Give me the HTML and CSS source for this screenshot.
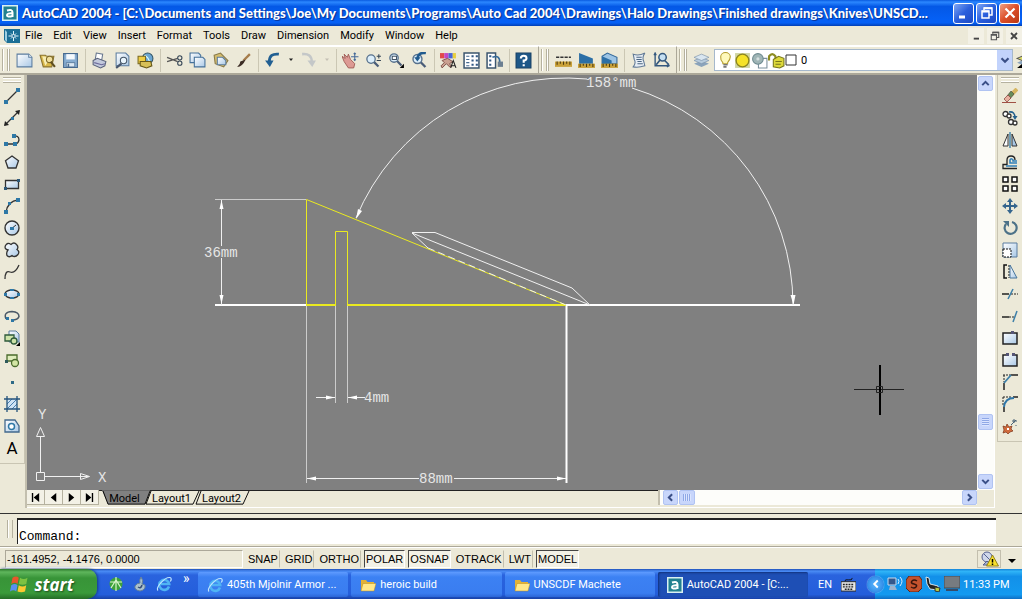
FILE: index.html
```html
<!DOCTYPE html>
<html lang="en">
<head>
    <meta charset="UTF-8">
    <meta name="viewport" content="width=device-width, initial-scale=1.0">
    <title>AutoCAD 2004</title>
    <link rel="stylesheet" href="styles.css">
</head>
<body>
    <!-- shared icon shapes -->
    <svg class="defs" width="0" height="0" aria-hidden="true">
        <defs>
            <linearGradient id="paper" x1="0" y1="0" x2="1" y2="1">
                <stop offset="0" stop-color="#ffffff"/>
                <stop offset="1" stop-color="#a9c8e6"/>
            </linearGradient>
            <symbol id="ie" viewBox="0 0 16 16">
                <path d="M13 10.500A5 5 0 1 1 13.200 8H5" fill="none" stroke="#4fb4f4" stroke-width="2.600"/>
                <path d="M2 14.500C-.5 12 8 1 14 1.500c2 .5 1 3 .3 4" fill="none" stroke="#bfe6ff" stroke-width="1.200"/>
            </symbol>
            <symbol id="folder" viewBox="0 0 16 16">
                <path d="M1 3h5l1.500 2H14v9H1z" fill="#e2b236"/>
                <path d="M3 6.500h13L14 14H1z" fill="#ffe88a" stroke="#b98a1c" stroke-width=".5"/>
            </symbol>
            <symbol id="acad" viewBox="0 0 16 16">
                <path d="M0 0h16v16H0z" fill="#d9f0f2"/>
                <path d="M1.500 1.500h13v13h-13z" fill="#21808f"/>
                <path d="M5 5.500q5.500-1.800 5.500 2V12M10.500 8.300Q5 8 5 10.200t5.500.8" fill="none" stroke="#fff" stroke-width="2"/>
            </symbol>
            <symbol id="left" viewBox="0 0 16 16"><path d="M10 4L6 8l4 4" fill="none" stroke="#3a4f87" stroke-width="2.500"/></symbol>
            <symbol id="right" viewBox="0 0 16 16"><path d="M6 4l4 4-4 4" fill="none" stroke="#3a4f87" stroke-width="2.500"/></symbol>
            <symbol id="up" viewBox="0 0 16 16"><path d="M4 10l4-4 4 4" fill="none" stroke="#3a4f87" stroke-width="2.500"/></symbol>
            <symbol id="down" viewBox="0 0 16 16"><path d="M4 6l4 4 4-4" fill="none" stroke="#3a4f87" stroke-width="2.500"/></symbol>
            <symbol id="lens" viewBox="0 0 16 16">
                <path d="M9.500 9.500l5 5" stroke="#4a5d78" stroke-width="2.400"/>
                <circle cx="6.500" cy="6.500" r="4.500" fill="#dceefa" stroke="#56708c" stroke-width="1.400"/>
            </symbol>
            <symbol id="restore" viewBox="0 0 16 16">
                <path d="M5 5V3h8v7h-3" fill="none" stroke="currentColor" stroke-width="1.500"/>
                <path d="M3 6h7v7H3z" fill="none" stroke="currentColor" stroke-width="1.500"/>
                <path d="M3 6.500h7M5 3.200h8" stroke="currentColor" stroke-width="2"/>
            </symbol>
        </defs>
    </svg>

    <header class="title-bar">
        <svg class="app-icon"><use href="#acad"/></svg>
        <h1>AutoCAD 2004 - [C:\Documents and Settings\Joe\My Documents\Programs\Auto Cad 2004\Drawings\Halo Drawings\Finished drawings\Knives\UNSCD...</h1>
        <button class="win-btn" aria-label="Minimize"><svg viewBox="0 0 16 16"><path d="M3 12h6" stroke="#fff" stroke-width="3"/></svg></button>
        <button class="win-btn" aria-label="Restore"><svg><use href="#restore"/></svg></button>
        <button class="win-btn close" aria-label="Close"><svg viewBox="0 0 16 16"><path d="M3.500 3.500l9 9m0-9l-9 9" stroke="#fff" stroke-width="2.200"/></svg></button>
    </header>

    <nav class="menu-bar">
        <svg class="doc-icon" viewBox="0 0 16 16">
            <path d="M0 1h16v14H3L0 12z" fill="#1c6f96"/>
            <path d="M1 2v10l2 2V4z" fill="#9fd0e2"/>
            <path d="M9.500 3v10M4.500 8h10M7 5.500l5 5m0-5l-5 5" stroke="#dff4fb"/>
            <circle cx="9.500" cy="8" r="1.500" fill="#1c6f96" stroke="#fff" stroke-width=".6"/>
        </svg>
        <button>File</button>
        <button>Edit</button>
        <button>View</button>
        <button>Insert</button>
        <button>Format</button>
        <button>Tools</button>
        <button>Draw</button>
        <button>Dimension</button>
        <button>Modify</button>
        <button>Window</button>
        <button>Help</button>
        <div class="doc-buttons">
            <button aria-label="Minimize drawing"><svg viewBox="0 0 16 16"><path d="M5 11.500h7" stroke="#444" stroke-width="2.500"/></svg></button>
            <button aria-label="Restore drawing"><svg><use href="#restore"/></svg></button>
            <button aria-label="Close drawing"><svg viewBox="0 0 16 16"><path d="M4 4l8 8m0-8l-8 8" stroke="#444" stroke-width="2.400"/></svg></button>
        </div>
    </nav>

    <div class="toolbars">
        <div class="toolbar">
            <span class="grip"></span>
            <button aria-label="New"><svg viewBox="0 0 16 16"><path d="M1 2h11l3 3v9H1z" fill="url(#paper)" stroke="#5b7da0"/><path d="M12 2v3h3" fill="#fff" stroke="#5b7da0"/></svg></button>
            <button aria-label="Open"><svg viewBox="0 0 16 16"><path d="M1 3h5l1 1h7l-2 10H4z" fill="#d9b84a" stroke="#8a7430"/><path d="M3 4l8 1-5 8z" fill="#f7edb4"/><circle cx="10" cy="7" r="3" fill="#f1df9a" stroke="#7d6a2b"/><path d="M11 9l4 5" stroke="#5e4f20" stroke-width="2"/></svg></button>
            <button aria-label="Save"><svg viewBox="0 0 16 16"><path d="M1.500 1.500h13v13h-13z" fill="#87add1" stroke="#46698f"/><path d="M4 2h8v5H4z" fill="#f4f9fd"/><path d="M4 10h8v4H4z" fill="#dbe8f3" stroke="#46698f" stroke-width=".7"/><path d="M6 11v3" stroke="#46698f" stroke-width="1.500"/></svg></button>
            <span class="sep"></span>
            <button aria-label="Plot"><svg viewBox="0 0 16 16"><path d="M5 1l6 1-1 6-6-1z" fill="#fff" stroke="#69788f"/><path d="M2 8l4-2 8 3-1 4-4 2-7-3z" fill="#c2c9dc" stroke="#59627b"/><path d="M3 10l7 2 3-1" fill="none" stroke="#6d6b9b"/></svg></button>
            <button aria-label="Plot Preview"><svg viewBox="0 0 16 16"><path d="M2 1h9l3 3v9H2z" fill="url(#paper)" stroke="#5b7da0"/><circle cx="9" cy="8" r="3" fill="#e9f5fd" stroke="#456"/><path d="M7 11l-5 4" stroke="#46566e" stroke-width="2"/></svg></button>
            <button aria-label="Publish"><svg viewBox="0 0 16 16"><circle cx="10" cy="6" r="5" fill="#6ba6d2" stroke="#356"/><path d="M7 3q4 2 5 7" stroke="#dff" fill="none"/><path d="M1 4h7v7H1z" fill="#f0ce45" stroke="#7a6a20"/><path d="M3 9h10l1 4-5 2-6-2z" fill="#d7c057" stroke="#665715"/></svg></button>
            <span class="sep"></span>
            <button aria-label="Cut"><svg viewBox="0 0 16 16"><path d="M1 5l10 4M1 9l10-3" stroke="#555" stroke-width="1.200"/><circle cx="13" cy="5.500" r="2" fill="none" stroke="#345"/><circle cx="13" cy="10.500" r="2" fill="none" stroke="#345"/></svg></button>
            <button aria-label="Copy"><svg viewBox="0 0 16 16"><path d="M1 1h8l2 2v7H1z" fill="url(#paper)" stroke="#45719a"/><path d="M5 5h8l2 2v7H5z" fill="url(#paper)" stroke="#45719a"/></svg></button>
            <button aria-label="Paste"><svg viewBox="0 0 16 16"><path d="M2 3l6-2 7 7-4 6-8-3z" fill="#d5bd6d" stroke="#897a48"/><path d="M5 5h5l3 3v4H5z" fill="url(#paper)" stroke="#5b7da0"/></svg></button>
            <button aria-label="Match Properties"><svg viewBox="0 0 16 16"><path d="M14 2L8 8" stroke="#a67c4a" stroke-width="2.200"/><path d="M10 7Q7 14 2 14q3-2 3-5z" fill="#3c2d26"/></svg></button>
            <span class="sep"></span>
            <button aria-label="Undo"><svg viewBox="0 0 16 16"><path d="M14 2Q5 1 5 9" fill="none" stroke="#215f92" stroke-width="2.600"/><path d="M1 8h8l-3.500 6z" fill="#215f92"/></svg></button>
            <button class="drop" aria-label="Undo list"><svg viewBox="0 0 8 8"><path d="M2 2.500h4l-2 2.500z" fill="#222"/></svg></button>
            <button aria-label="Redo"><svg viewBox="0 0 16 16"><path d="M2 2q9-1 9 7" fill="none" stroke="#c4c7c8" stroke-width="2.400"/><path d="M7 8h8l-3.500 6z" fill="#c4c7c8"/></svg></button>
            <button class="drop" aria-label="Redo list"><svg viewBox="0 0 8 8"><path d="M2 2.500h4l-2 2.500z" fill="#c4c0b4"/></svg></button>
            <span class="sep"></span>
            <button aria-label="Pan"><svg viewBox="0 0 16 16"><path d="M0 4l3 2-1-4 3 3 1-3 2 5 4 4-1 4H6L2 9z" fill="#dd9a94" stroke="#9b5650" stroke-width=".8"/><path d="M12 1v7M8.500 4.500h7M11 2l1-1 1 1M11 7l1 1 1-1" stroke="#456a99" fill="none"/></svg></button>
            <button aria-label="Zoom Realtime"><svg viewBox="0 0 16 16"><use href="#lens" width="14" height="16"/><path d="M11 4h4m-2-2v4M11 8h4" stroke="#345"/></svg></button>
            <button aria-label="Zoom Window"><svg viewBox="0 0 16 16"><use href="#lens" width="14" height="14"/><path d="M4 4h4v3H4z" fill="#fff" stroke="#456"/><path d="M15 11v4h-4z" fill="#000"/></svg></button>
            <button aria-label="Zoom Previous"><svg viewBox="0 0 16 16"><use href="#lens" width="15" height="16"/><path d="M14 1Q7 0 6 6" fill="none" stroke="#205a8e" stroke-width="2.400"/><path d="M3 5h6L6 9z" fill="#205a8e"/></svg></button>
            <span class="sep"></span>
            <button aria-label="Properties"><svg viewBox="0 0 16 16"><path d="M0 1h4v5H0z" fill="#e04a4a"/><path d="M4 1h4v5H4z" fill="#c247c4"/><path d="M8 1h4v5H8z" fill="#4766d8"/><path d="M12 1h3v5h-3z" fill="#e8ce3c"/><path d="M2 8l5-2 5 3-3 2 2 3H9l-3-3-4 4-1-2 3-3z" fill="#caa091" stroke="#72453d" stroke-width=".8"/><path d="M10 15l2.500-7 2.500 7M11 13h3" fill="none" stroke="#222"/></svg></button>
            <button aria-label="DesignCenter"><svg viewBox="0 0 16 16"><path d="M1 1h14v14H1z" fill="#fff" stroke="#3b556e" stroke-width="1.400"/><path d="M3 4h3M3 7h3M3 10h3M3 13h3" stroke="#456a91"/><path d="M8 3h2v2H8zM12 3h2v2h-2zM8 7h2v2H8zM12 7h2v2h-2zM8 11h2v2H8zM12 11h2v2h-2z" fill="#325985"/></svg></button>
            <button aria-label="Tool Palettes"><svg viewBox="0 0 16 16"><path d="M1 1h8v14H1z" fill="#fff" stroke="#3b556e" stroke-width="1.400"/><path d="M3 3h2v2H3zM3 7h2v2H3zM3 11h2v2H3z" fill="#325985"/><path d="M6 5q7-3 7 5" fill="none" stroke="#356b9b" stroke-width="1.500"/><path d="M11 9h5v5h-5z" fill="#6c7f91"/></svg></button>
            <span class="sep"></span>
            <button aria-label="Help"><svg viewBox="0 0 16 16"><path d="M1 1h14v14H1z" fill="#1d5788" stroke="#123d63"/><path d="M5.500 6q0-2.500 2.700-2.500T10.800 6Q10.800 7.500 8.200 8v2M8.200 11.500v2" fill="none" stroke="#fff" stroke-width="2"/></svg></button>
        </div>
        <div class="toolbar">
            <span class="grip"></span>
            <button aria-label="Distance"><svg viewBox="0 0 16 16"><path d="M1 5h14" stroke="#333" stroke-width="1.400" stroke-dasharray="3 1"/><path d="M0 9h16v5H0z" fill="#c9a13a"/><path d="M2 9v3m3-3v2m3-2v3m3-3v2m3-2v3" stroke="#4b3a10"/></svg></button>
            <button aria-label="Area"><svg viewBox="0 0 16 16"><path d="M1 1l13 5v5H1z" fill="#2c6fa6"/><path d="M0 11h16v4H0z" fill="#c9a13a"/><path d="M2 11v3m3-3v2m3-2v3m3-3v2m3-2v3" stroke="#4b3a10"/></svg></button>
            <button aria-label="Region Properties"><svg viewBox="0 0 16 16"><path d="M1 4l5-3 9 4v6H1z" fill="#9dc4e4" stroke="#34699a"/><path d="M1 4l9 4v4H1z" fill="#2c6fa6"/><path d="M0 11h16v4H0z" fill="#c9a13a"/><path d="M2 11v3m3-3v2m3-2v3m3-3v2m3-2v3" stroke="#4b3a10"/></svg></button>
            <span class="sep"></span>
            <button aria-label="List"><svg viewBox="0 0 16 16"><path d="M3 2q5 2 11-1-3 4-1 8l1 4q-6 2-11 1 3-4 1-7z" fill="#e6edf5" stroke="#627a96"/><path d="M6 5h5M6 7h5M7 9h4M7 11h5" stroke="#4b6684"/></svg></button>
            <button aria-label="Locate Point"><svg viewBox="0 0 16 16"><path d="M2 1v12h13M1 3l1-2 1 2M13 12l2 1-2 1" fill="none" stroke="#34587e" stroke-width="1.300"/><circle cx="9" cy="5" r="3.500" fill="#c5dff2" stroke="#34587e" stroke-width="1.400"/><path d="M11 8l4 4M7 7l-4 5" stroke="#34587e" stroke-width="1.600"/></svg></button>
        </div>
        <div class="toolbar layers">
            <span class="grip"></span>
            <button aria-label="Layer Properties Manager"><svg viewBox="0 0 16 16"><path d="M1 11l7-3 7 3-7 3z" fill="#8aa3bb"/><path d="M1 8l7-3 7 3-7 3z" fill="#b7cbdc" stroke="#7790a8" stroke-width=".6"/><path d="M1 5l7-3 7 3-7 3z" fill="#d9e6f0" stroke="#7790a8" stroke-width=".6"/></svg></button>
            <div class="layer-combo">
                <svg viewBox="0 0 16 16"><path d="M5.500 10Q3 7 3.500 4.500a4.500 4 0 0 1 9 0Q12.500 7 10 10v1H5.500z" fill="#fff9bb" stroke="#b59d2c"/><path d="M6 12h4M6 14h3" stroke="#777" stroke-width="1.500"/></svg>
                <svg viewBox="0 0 16 16"><path d="M1 1h14v14H1z" fill="#cfd5a4"/><circle cx="8" cy="8" r="6" fill="#f5e229" stroke="#8c8520" stroke-width="1.300"/></svg>
                <svg viewBox="0 0 16 16"><path d="M7 6h8v9H7z" fill="#fff" stroke="#7b8f9c"/><circle cx="6.500" cy="6.500" r="5" fill="#9fb5b6" stroke="#6e8a90"/><circle cx="6.500" cy="6.500" r="1.500" fill="#d5dfe0"/></svg>
                <svg viewBox="0 0 16 16"><path d="M1 8V4q3-4 6 0v4" fill="none" stroke="#8d8c22" stroke-width="2"/><path d="M5 7l5-3 5 2v7l-4 2-6-1z" fill="#ddd93a" stroke="#77761c"/><path d="M7 9h6M7 11.500h5" stroke="#77761c"/></svg>
                <svg class="swatch" viewBox="0 0 12 12"><path d="M1 1h10v10H1z" fill="#fff" stroke="#333"/></svg>
                <select aria-label="Layer"><option>0</option></select>
                <span class="combo-arrow"><svg><use href="#down"/></svg></span>
            </div>
            <button class="last" aria-label="Make Layer Current"><svg viewBox="0 0 16 16"><path d="M1 10l7-3 7 3-7 3z" fill="#8aa3bb"/><path d="M1 6l7-3 7 3-7 3z" fill="#d9d96a" stroke="#555"/><path d="M1 15l5-4v4z"/></svg></button>
        </div>
    </div>

    <main class="workspace">
        <div class="side-bar">
            <div class="side-tools">
                <span class="grip-h"></span>
                <button aria-label="Line"><svg viewBox="0 0 16 16"><path d="M2 14L14 2" stroke="#333" stroke-width="1.300"/><path d="M0 12h4v4H0zM12 0h4v4h-4z" fill="#2e78a6"/></svg></button>
                <button aria-label="Construction Line"><svg viewBox="0 0 16 16"><path d="M1 15L15 1" stroke="#333" stroke-width="1.300"/><path d="M0 16l1-5 4 4zM16 0l-5 1 4 4z" fill="#222"/><path d="M7 7h3v3H7z" fill="#2e78a6"/></svg></button>
                <button aria-label="Polyline"><svg viewBox="0 0 16 16"><path d="M2 12h9M9 4q6-1 6 4-1 4-4 4" fill="none" stroke="#333" stroke-width="1.300"/><path d="M0 10h4v4H0zM9 10h4v4H9zM8 2h4v4H8z" fill="#2e78a6"/></svg></button>
                <button aria-label="Polygon"><svg viewBox="0 0 16 16"><path d="M8 2l6.500 4.800L12 14H4L1.500 6.800z" fill="url(#paper)" stroke="#333" stroke-width="1.300"/></svg></button>
                <button aria-label="Rectangle"><svg viewBox="0 0 16 16"><path d="M1.500 4.500h13v8h-13z" fill="url(#paper)" stroke="#333" stroke-width="1.300"/><path d="M0 11h3v3H0zM13 3h3v3h-3z" fill="#2e5878"/></svg></button>
                <button aria-label="Arc"><svg viewBox="0 0 16 16"><path d="M2 14Q4 3 14 2" fill="none" stroke="#333" stroke-width="1.300"/><path d="M0 12h4v4H0zM12 0h4v4h-4zM4 4h3v3H4z" fill="#2e78a6"/></svg></button>
                <button aria-label="Circle"><svg viewBox="0 0 16 16"><circle cx="8" cy="8" r="7" fill="url(#paper)" stroke="#333" stroke-width="1.400"/><path d="M7 9l5-4" stroke="#333"/><path d="M6 7h4v3H6z" fill="#2e78a6"/></svg></button>
                <button aria-label="Revision Cloud"><svg viewBox="0 0 16 16"><path d="M4 8Q0 7 1.500 3.500 3.500 0 7 2.500 10-.5 12.500 2.500 15 5 13 7.500q3 2 1 5-3 3.500-6 1-3 2.500-5 0-1-3 1-5.500z" fill="url(#paper)" stroke="#333" stroke-width="1.300"/></svg></button>
                <button aria-label="Spline"><svg viewBox="0 0 16 16"><path d="M1 15Q1 6 6 8t9-7" fill="none" stroke="#333" stroke-width="1.300"/></svg></button>
                <button aria-label="Ellipse"><svg viewBox="0 0 16 16"><ellipse cx="8" cy="8" rx="7" ry="4" fill="url(#paper)" stroke="#333" stroke-width="1.300"/><path d="M6 3h4v2H6zM6 11h4v2H6zM0 7h3v3H0zM13 7h3v3h-3z" fill="#2e78a6"/></svg></button>
                <button aria-label="Ellipse Arc"><svg viewBox="0 0 16 16"><path d="M2 11Q-1 4 8 3.500 15 4 15 8.500 14 12 8 12" fill="none" stroke="#4a5866" stroke-width="1.500"/><path d="M2 9h3v3H2zM7 11h3v3H7z" fill="#2e78a6"/></svg></button>
                <button aria-label="Insert Block"><svg viewBox="0 0 16 16"><path d="M5 1h7l3 3v8H5z" fill="url(#paper)" stroke="#5b7da0"/><path d="M1 5h9v6H1z" fill="#cde3a8" stroke="#2e5a3a" stroke-width="1.300"/><circle cx="10" cy="11" r="3" fill="#cde3a8" stroke="#2e5a3a" stroke-width="1.300"/><path d="M16 12v4h-4z"/></svg></button>
                <button aria-label="Make Block"><svg viewBox="0 0 16 16"><path d="M3 3h10v6H3z" fill="#e0edbd" stroke="#4a6b2c" stroke-width="1.300"/><circle cx="11" cy="11" r="3.500" fill="#d4e6a5" stroke="#4a6b2c" stroke-width="1.300"/><path d="M1 8h3v3H1z" fill="#2e5a5a"/></svg></button>
                <button aria-label="Point"><svg viewBox="0 0 16 16"><path d="M7 7h3v3H7z" fill="#2e6a86"/></svg></button>
                <button aria-label="Hatch"><svg viewBox="0 0 16 16"><path d="M3 3h10v10H3z" fill="#cfe3f4"/><path d="M3 8l5-5M3 13L13 3M8 13l5-5" stroke="#4b81b0"/><path d="M3 0v16M13 0v16M0 3h16M0 13h16" stroke="#24537c" stroke-width="1.300"/></svg></button>
                <button aria-label="Region"><svg viewBox="0 0 16 16"><path d="M1 2h10l4 6v6H1z" fill="url(#paper)" stroke="#42688d" stroke-width="1.300"/><circle cx="7.500" cy="8.500" r="3" fill="#fff" stroke="#2e78a6" stroke-width="1.500"/></svg></button>
                <button class="mtext" aria-label="Multiline Text">A</button>
            </div>
        </div>

        <div class="drawing">
            <div class="canvas">
                <svg class="model" width="100%" height="100%">
                    <!-- extension lines -->
                    <g class="ext">
                        <path d="M188 124.500h91"/>
                        <path d="M279.500 231v177M308.500 231v97M320.500 231v97"/>
                    </g>
                    <g class="heavy">
                        <path d="M188 230h91M539 230h234"/>
                        <path d="M539.500 230v178"/>
                    </g>
                    <!-- part outline -->
                    <g class="part">
                        <path d="M279.500 230V124.500L539 230"/>
                        <path d="M308.500 230v-73.500h12V230"/>
                        <path class="base" d="M279 230h30M320 230h219"/>
                    </g>
                    <g class="thin">
                        <path d="M385 157.500h23L545 213l18 17L385 158l16 15"/>
                        <path d="M401 173l138 57" stroke-dasharray="7 4"/>
                        <!-- dimension lines -->
                        <path d="M194.500 125v46M194.500 183v47"/>
                        <path d="M289 322.500h19M321 322.500h17"/>
                        <path d="M280 403.500h112M427 403.500h112"/>
                        <path d="M329 143A227 227 0 0 1 560 4M605 13A227 227 0 0 1 766 230"/>
                    </g>
                    <g class="arrows">
                        <path d="M194.500 125l-2 9h4zM194.500 229l-2-9h4z"/>
                        <path d="M308 322.500l-9-2v4zM321 322.500l9-2v4z"/>
                        <path d="M280 403.500l9-2v4zM539 403.500l-9-2v4z"/>
                        <path d="M329 144l2-10 4 2zM766.500 230l-3-10h5z"/>
                    </g>
                    <g class="dim-text">
                        <text x="177" y="182">36mm</text>
                        <text x="337" y="327">4mm</text>
                        <text x="392" y="408">88mm</text>
                        <text x="559" y="12">158°mm</text>
                    </g>
                    <!-- UCS icon -->
                    <g class="thin">
                        <path d="M9.500 397.500h8v8h-8zM13.500 397v-35M17.500 401.500h44"/>
                        <path d="M13.500 352.500l-4 9h8zM62.500 401.500l-9-3v6z"/>
                    </g>
                    <g class="dim-text">
                        <text x="11" y="344">Y</text>
                        <text x="71" y="407">X</text>
                    </g>
                    <g class="cursor">
                        <path d="M827 314.500h50"/>
                        <path class="v" d="M853 290v50"/>
                        <path d="M849.500 311.500h6v6h-6z"/>
                    </g>
                </svg>
                <div class="scroll-v">
                    <button class="sb" aria-label="Scroll up"><svg><use href="#up"/></svg></button>
                    <span class="track"></span>
                    <span class="sb thumb"></span>
                    <span class="rest"></span>
                    <button class="sb" aria-label="Scroll down"><svg><use href="#down"/></svg></button>
                </div>
            </div>
            <div class="tab-row">
                <button class="nav" aria-label="First tab"><svg viewBox="0 0 12 12"><path d="M2 1h1.500v10H2zM10 1v10L4 6z"/></svg></button>
                <button class="nav" aria-label="Previous tab"><svg viewBox="0 0 12 12"><path d="M9 1v10L3 6z"/></svg></button>
                <button class="nav" aria-label="Next tab"><svg viewBox="0 0 12 12"><path d="M3 1v10l6-5z"/></svg></button>
                <button class="nav" aria-label="Last tab"><svg viewBox="0 0 12 12"><path d="M10 1H8.500v10H10zM2 1v10l6-5z"/></svg></button>
                <div class="tabs">
                    <button class="tab active"><svg viewBox="0 0 48 16" preserveAspectRatio="none"><path d="M0-1h48l-5 16H6z" fill="#808080"/><path d="M1 0l5 15h37l5-15" fill="none" stroke="#000"/></svg><span>Model</span></button>
                    <button class="tab"><svg viewBox="0 0 54 16" preserveAspectRatio="none"><path d="M5 0l-5 15h47l6-15" fill="#ece9d8" stroke="#000"/></svg><span>Layout1</span></button>
                    <button class="tab"><svg viewBox="0 0 54 16" preserveAspectRatio="none"><path d="M5 0l-5 15h47l6-15" fill="#ece9d8" stroke="#000"/></svg><span>Layout2</span></button>
                </div>
                <div class="scroll-h">
                    <button class="sb" aria-label="Scroll left"><svg><use href="#left"/></svg></button>
                    <span class="sb thumb"></span>
                    <span class="track"></span>
                    <button class="sb" aria-label="Scroll right"><svg><use href="#right"/></svg></button>
                </div>
                <span class="corner"></span>
            </div>
        </div>

        <div class="side-bar right">
            <div class="side-tools">
                <span class="grip-h"></span>
                <button aria-label="Erase"><svg viewBox="0 0 16 16"><path d="M15 1l-6 6" stroke="#d6b560" stroke-width="4"/><path d="M12 6L9 3 5 8l3 3z" fill="#668c5a" stroke="#333" stroke-width=".5"/><path d="M2 11l4-4 3 3-4 4z" fill="#e8b0a0" stroke="#803c36" stroke-width=".7"/><path d="M0 14.500h14" stroke="#a05044"/></svg></button>
                <button aria-label="Copy Object"><svg viewBox="0 0 16 16"><g fill="#fff" stroke="#333" stroke-width="1.300"><circle cx="3.500" cy="4" r="2.500"/><circle cx="7" cy="6" r="2"/><circle cx="9" cy="12" r="2.500"/><circle cx="13" cy="13" r="2"/></g><path d="M7 2q6-1 6 6" fill="none" stroke="#24618e" stroke-width="1.500"/><path d="M10.500 6h5L13 10z" fill="#24618e"/></svg></button>
                <button aria-label="Mirror"><svg viewBox="0 0 16 16"><path d="M6 2v12H1z" fill="#fff" stroke="#333"/><path d="M10 2v12h5z" fill="#a9c8e6" stroke="#333"/><path d="M8 0v16" stroke="#2e78a6" stroke-width="1.300"/></svg></button>
                <button aria-label="Offset"><svg viewBox="0 0 16 16"><path d="M15 14.500H1v-4h4V6q0-4 4-4t4 4" fill="none" stroke="#222" stroke-width="1.300"/><path d="M15 12H4M15 9H8V6q1-2.500 3 0v1h4" fill="none" stroke="#317fb8" stroke-width="1.600"/></svg></button>
                <button aria-label="Array"><svg viewBox="0 0 16 16"><path d="M1 1h5v5H1zM10 1h5v5h-5zM1 10h5v5H1zM10 10h5v5h-5z" fill="#fff" stroke="#111" stroke-width="1.500"/></svg></button>
                <button aria-label="Move"><svg viewBox="0 0 16 16"><path d="M8 2v12M2 8h12" stroke="#35658d" stroke-width="2"/><path d="M8 0l3 4H5zM8 16l3-4H5zM0 8l4-3v6zM16 8l-4-3v6z" fill="#35658d"/></svg></button>
                <button aria-label="Rotate"><svg viewBox="0 0 16 16"><path d="M4 4a6 6 0 1 0 6-2" fill="none" stroke="#4d7288" stroke-width="2.200"/><path d="M1 1h6v6z" fill="#4d7288"/></svg></button>
                <button aria-label="Scale"><svg viewBox="0 0 16 16"><path d="M1 1h14v14H1z" fill="url(#paper)" stroke="#5b7da0"/><path d="M1 7h8v8H1z" fill="#fff" stroke="#111" stroke-dasharray="2 1"/></svg></button>
                <button aria-label="Stretch"><svg viewBox="0 0 16 16"><path d="M5 1H2v13h3" fill="none" stroke="#111" stroke-width="1.500"/><path d="M7 1v13" stroke="#111" stroke-dasharray="2 1"/><path d="M8 1l7 13H8z" fill="url(#paper)" stroke="#49759b"/></svg></button>
                <button aria-label="Trim"><svg viewBox="0 0 16 16"><path d="M0 8h7" stroke="#222" stroke-width="1.500"/><path d="M9 8h7" stroke="#222" stroke-dasharray="2 1"/><path d="M6 13l5-10" stroke="#3d7fa8" stroke-width="1.500"/></svg></button>
                <button aria-label="Extend"><svg viewBox="0 0 16 16"><path d="M0 9h7" stroke="#222" stroke-width="1.500"/><path d="M7 9h5" stroke="#222" stroke-dasharray="2 1"/><path d="M11 14l4-11" stroke="#3d7fa8" stroke-width="1.500"/></svg></button>
                <button aria-label="Break at Point"><svg viewBox="0 0 16 16"><path d="M1 3h14v11H1z" fill="url(#paper)" stroke="#222" stroke-width="1.500"/><path d="M9 1h3v3H9z" fill="#557"/></svg></button>
                <button aria-label="Break"><svg viewBox="0 0 16 16"><path d="M5 3H1v11h14V3h-4" fill="url(#paper)" stroke="#222" stroke-width="1.500"/><path d="M4 1h3v3H4zM10 1h3v3h-3z" fill="#557"/></svg></button>
                <button aria-label="Chamfer"><svg viewBox="0 0 16 16"><path d="M1 1h8M2 1v7" stroke="#222" stroke-dasharray="2 1"/><path d="M9 1h7M2 9v7" stroke="#222" stroke-width="1.500"/><path d="M2 9l7-8" stroke="#3d7fa8" stroke-width="1.800"/></svg></button>
                <button aria-label="Fillet"><svg viewBox="0 0 16 16"><path d="M1 1h8M1 1v8" stroke="#222" stroke-dasharray="2 1"/><path d="M11 1h5M2 11v5" stroke="#222" stroke-width="1.500"/><path d="M2 11Q3 2 12 2" fill="none" stroke="#2f76a8" stroke-width="2"/></svg></button>
                <button aria-label="Explode"><svg viewBox="0 0 16 16"><path d="M1 8l3 1 1-3 2 3 3-1-1 3 2 2-3 1-2 2-2-2-3 1 1-3z" fill="#cf6a3c" stroke="#7c3518" stroke-width=".7"/><path d="M5 10h2v2H5z" fill="#fff"/><path d="M9 7l5-5M12 1v4M10 3h5M14 7v1" stroke="#4b6478"/></svg></button>
            </div>
        </div>
    </main>

    <div class="command">
        <span class="grip"></span>
        <input type="text" aria-label="Command line" value="Command:">
    </div>

    <footer class="status-bar">
        <output class="coords">-161.4952, -4.1476, 0.0000</output>
        <button>SNAP</button>
        <button>GRID</button>
        <button>ORTHO</button>
        <button class="on">POLAR</button>
        <button class="on">OSNAP</button>
        <button>OTRACK</button>
        <button>LWT</button>
        <button class="on">MODEL</button>
        <div class="comm">
            <svg viewBox="0 0 18 16"><circle cx="6" cy="6" r="5" fill="#cfd7ea" stroke="#566191"/><path d="M3 3l6 6M6 10l-4 4h8z" stroke="#566191" fill="#a8b3d0"/><path d="M11.500 4l6 11h-12z" fill="#f7e02c" stroke="#93821a"/><path d="M11.500 8v3.500M11.500 12.500v1.500" stroke="#000" stroke-width="1.500"/></svg>
        </div>
        <svg class="tray-arrow" viewBox="0 0 8 8"><path d="M0 2h8L4 6z"/></svg>
    </footer>

    <div class="taskbar">
        <button class="start">
            <svg viewBox="0 0 16 16"><path d="M2 3q3-2 5 0L6 8Q4 6 1 8z" fill="#e8562c"/><path d="M8 3q3 2 6 0l-1 5q-3 1-6 0z" fill="#7cc242"/><path d="M1 9q3-2 5 0l-1 5q-2-2-5 0z" fill="#5a8ff0"/><path d="M7 9q3 2 6 0l-1 5q-3 1-6 0z" fill="#fcc931"/></svg>
            start
        </button>
        <div class="quick">
            <button aria-label="LimeWire"><svg viewBox="0 0 16 16"><circle cx="8" cy="8" r="6.500" fill="#3da23a"/><path d="M8 1v14M2 6h12M3 12L8 4l5 8" fill="none" stroke="#d7f3c8" stroke-width="1.200"/></svg></button>
            <button aria-label="Messenger"><svg viewBox="0 0 16 16"><path d="M9 1q3 4 1 7l3 1q1 5-5 6-6-1-5-5 2-3 5-3Q7 4 9 1z" fill="#aac0cd" stroke="#637f9a"/><path d="M6 11q3 2 4-2" fill="none" stroke="#344c75" stroke-width="1.500"/></svg></button>
            <button aria-label="Internet Explorer"><svg><use href="#ie"/></svg></button>
            <span class="more">»</span>
        </div>
        <div class="tasks">
            <button class="task"><svg><use href="#ie"/></svg>405th Mjolnir Armor ...</button>
            <button class="task"><svg><use href="#folder"/></svg>heroic build</button>
            <button class="task"><svg><use href="#folder"/></svg>UNSCDF Machete</button>
            <button class="task current"><svg><use href="#acad"/></svg>AutoCAD 2004 - [C:...</button>
        </div>
        <div class="lang">
            <span>EN</span>
            <svg viewBox="0 0 16 16"><path d="M4 5q0-3 4-2t4-2" stroke="#111" fill="none"/><path d="M0 5h16v10H0z" fill="#e8e8e8" stroke="#222"/><path d="M2 8h12M2 10.500h12M4 13h8" stroke="#222" stroke-dasharray="2 1" stroke-width="1.500"/></svg>
        </div>
        <div class="tray">
            <button class="hide" aria-label="Hide inactive icons"><svg viewBox="0 0 16 16"><path d="M10 4L6 8l4 4" fill="none" stroke="#fff" stroke-width="2.200"/></svg></button>
            <svg viewBox="0 0 16 16"><path d="M1 2h8v7H1z" fill="#35588c" stroke="#c8dbef"/><path d="M3 10h5l2 4H2z" fill="#9fb4cd"/><path d="M11 3q2 2 0 5M13 1q4 4 0 9" fill="none" stroke="#d8ecff"/></svg>
            <svg viewBox="0 0 16 16"><path d="M3 0h10l3 4v8l-4 4H4l-4-4V4z" fill="#c5532e" stroke="#5f2616"/><path d="M11 5Q8 3 6 5t2 3 2 3-5 0" fill="none" stroke="#37140c" stroke-width="1.500"/></svg>
            <svg viewBox="0 0 16 16"><path d="M1 1l3 1 1 6 8 2v4l-8-1-3-5z" fill="#222" stroke="#fff" stroke-width=".8"/><path d="M10 11l5 1-1 4-4-1z" fill="#b9cc42" stroke="#333"/></svg>
            <svg viewBox="0 0 16 16"><path d="M0 0h16v12H0z" fill="#777b80" stroke="#454c55"/><path d="M2 13h12v2H2z" fill="#374b69"/></svg>
            <time>11:33 PM</time>
        </div>
    </div>
</body>
</html>
```
FILE: styles.css
```css
* {
    box-sizing: border-box;
}
body {
    margin: 0;
    height: 100vh;
    display: flex;
    flex-direction: column;
    overflow: hidden;
    background-color: #ece9d8;
    font-family: Roboto, Tahoma, "Liberation Sans", sans-serif;
    font-size: 11px;
    color: #000000;
}
button {
    margin: 0;
    padding: 0;
    border: none;
    background: none;
    font: inherit;
    color: inherit;
    display: flex;
    align-items: center;
    justify-content: center;
    flex: none;
}
svg {
    display: block;
    flex: none;
}
.defs {
    position: absolute;
}

/* title bar */
.title-bar {
    flex: none;
    display: flex;
    align-items: center;
    gap: 2px;
    height: 26px;
    padding: 0 2px;
    background: linear-gradient(#0a5be0 0%, #2b87ff 8%, #0458e6 25%, #0560f5 75%, #0560f5 88%, #0340b4 100%);
    color: #ffffff;
}
.app-icon {
    width: 16px;
    height: 16px;
}
.title-bar h1 {
    flex: 1;
    min-width: 0;
    margin: 0;
    padding-left: 2px;
    overflow: hidden;
    white-space: nowrap;
    text-overflow: ellipsis;
    font-family: Lato, "Trebuchet MS", sans-serif;
    font-size: 13px;
    font-weight: 900;
    text-shadow: 1px 1px 1px #0a2f8c;
}
.win-btn {
    width: 21px;
    height: 21px;
    border: 1px solid #ffffff;
    border-radius: 3px;
    background: linear-gradient(135deg, #7fa6f4, #2a5fdc 50%, #1c49c4);
}
.win-btn svg {
    width: 16px;
    height: 16px;
}
.win-btn.close {
    background: linear-gradient(135deg, #f0a085, #dc4e28 50%, #b93713);
}

/* menu */
.menu-bar {
    flex: none;
    display: flex;
    align-items: center;
    gap: 11px;
    height: 20px;
    padding-left: 4px;
    border-bottom: 1px solid #ffffff;
}
.doc-icon {
    width: 16px;
    height: 16px;
    margin-right: -6px;
}
.doc-buttons {
    display: flex;
    gap: 3px;
    margin-left: auto;
    color: #555555;
}
.doc-buttons button {
    width: 16px;
    height: 16px;
    background-color: #f3f1e6;
}
.doc-buttons svg {
    width: 12px;
    height: 12px;
}

/* toolbars */
.toolbars {
    flex: none;
    display: flex;
    height: 29px;
    border-bottom: 2px solid #aca899;
}
.toolbar {
    display: flex;
    align-items: center;
    padding-right: 3px;
    border-top: 1px solid #ffffff;
    border-right: 1px solid #aca899;
}
.toolbar button {
    width: 23px;
    height: 23px;
}
.toolbar button svg {
    width: 17px;
    height: 17px;
}
.toolbar .drop {
    width: 13px;
}
.toolbar .drop svg {
    width: 8px;
    height: 8px;
}
.grip {
    flex: none;
    width: 8px;
    height: 22px;
    margin: 0 3px 0 2px;
    border: solid #b5b19f;
    border-width: 0 1px;
    background: linear-gradient(90deg, #ffffff 1px, transparent 1px 4px, #b5b19f 4px 5px, #ffffff 5px);
}
.sep {
    width: 1px;
    height: 23px;
    margin: 0 2px 0 3px;
    background-color: #cbc7b4;
}
.layers {
    flex: 1;
    min-width: 0;
    padding-right: 0;
    border-right: none;
}
.layer-combo {
    flex: 1;
    min-width: 0;
    display: flex;
    align-items: center;
    height: 22px;
    margin: 0 3px 0 1px;
    padding-left: 2px;
    border: 1px solid #a5b8cc;
    background-color: #ffffff;
}
.layer-combo > svg {
    width: 17px;
    height: 17px;
}
.layer-combo .swatch {
    width: 12px;
    height: 12px;
}
.layer-combo select {
    flex: 1;
    min-width: 0;
    padding: 0 0 0 4px;
    border: none;
    background: none;
    appearance: none;
    font: inherit;
    font-size: 11px;
}
.combo-arrow {
    width: 15px;
    height: 20px;
    display: flex;
    align-items: center;
    justify-content: center;
    background-color: #c2d3fc;
}
.combo-arrow svg {
    width: 14px;
    height: 14px;
}
.toolbar .last {
    width: 6px;
    justify-content: flex-start;
    overflow: hidden;
}

/* workspace */
.workspace {
    flex: 1;
    min-height: 0;
    display: flex;
}
.side-bar {
    flex: none;
    width: 27px;
    border-right: 2px solid #c3bfae;
}
.side-tools {
    display: flex;
    flex-direction: column;
    align-items: center;
    padding-bottom: 4px;
    border: solid #c9c5b3;
    border-width: 0 1px 1px 0;
}
.side-tools button {
    width: 22px;
    height: 22px;
}
.side-tools svg {
    width: 16px;
    height: 16px;
}
.side-tools .mtext {
    font-size: 17px;
}
.grip-h {
    width: 18px;
    height: 6px;
    margin: 2px 0;
    border: solid #b5b19f;
    border-width: 1px 0;
    background: linear-gradient(#ffffff 1px, transparent 1px 3px, #ffffff 3px);
}
.right {
    width: 28px;
    padding-left: 2px;
    border-right: none;
    border-left: 1px solid #ffffff;
}
.right .side-tools {
    border-width: 0 0 1px 1px;
}
.drawing {
    flex: 1;
    min-width: 0;
    display: flex;
    flex-direction: column;
}
.canvas {
    flex: 1;
    min-height: 0;
    display: flex;
    background-color: #808080;
}
.model {
    flex: 1;
    min-width: 0;
    fill: none;
    stroke-width: 1;
}
.ext {
    stroke: #cccccc;
}
.heavy {
    stroke: #ffffff;
    stroke-width: 2;
}
.part {
    stroke: #eaea20;
}
.part .base {
    stroke-width: 2;
}
.thin {
    stroke: #f0f0f0;
}
.arrows {
    fill: #ffffff;
}
.dim-text {
    fill: #e6e6e6;
    font-family: "Liberation Mono", monospace;
    font-size: 14px;
}
.cursor {
    stroke: #222222;
}
.cursor .v {
    stroke: #000000;
    stroke-width: 2;
}

/* scroll bars */
.scroll-v {
    flex: none;
    width: 17px;
    display: flex;
    flex-direction: column;
    padding: 1px;
    background-color: #fdfdfa;
}
.scroll-v .track {
    flex: 1;
}
.scroll-v .rest {
    height: 44px;
}
.sb {
    width: 15px;
    height: 15px;
    border: 1px solid #b0c3f2;
    border-radius: 2px;
    background-color: #c8d6fb;
}
.sb svg {
    width: 13px;
    height: 13px;
}
.scroll-v .thumb {
    height: 16px;
    background: repeating-linear-gradient(#8fa8e6 0 1px, #dbe5ff 1px 2px) center / 7px 8px no-repeat #c8d6fb;
}
.scroll-h {
    flex: 0 0 33%;
    display: flex;
    align-items: center;
    gap: 1px;
    padding-left: 3px;
    border-left: 2px solid #c3bfae;
    background-color: #fdfdfa;
}
.scroll-h .thumb {
    width: 16px;
    background: repeating-linear-gradient(90deg, #8fa8e6 0 1px, #dbe5ff 1px 2px) center / 8px 7px no-repeat #c8d6fb;
}
.scroll-h .track {
    flex: 1;
}
.corner {
    width: 17px;
}

/* layout tabs */
.tab-row {
    flex: none;
    display: flex;
    height: 18px;
    padding-bottom: 2px;
    border-bottom: 1px solid #ffffff;
}
.nav {
    width: 18px;
    border: solid #b5b19f;
    border-width: 0 1px 1px 0;
    background-color: #f3f1e6;
}
.nav svg {
    width: 11px;
    height: 11px;
}
.tabs {
    flex: 1;
    min-width: 0;
    display: flex;
    padding-left: 3px;
    border-top: 1px solid #222222;
}
.tab {
    position: relative;
    width: 54px;
    margin-left: -4px;
    padding-right: 3px;
}
.tab.active {
    width: 48px;
    margin-left: 0;
}
.tab svg {
    position: absolute;
    inset: 0;
    width: 100%;
    height: 100%;
    overflow: visible;
}
.tab span {
    position: relative;
}

/* command line */
.command {
    flex: none;
    display: flex;
    align-items: center;
    height: 39px;
    padding: 5px 26px 2px 5px;
    background: linear-gradient(#ece9d8 5px, #333333 5px 6px, #ece9d8 6px);
    border-bottom: 1px solid #aca899;
}
.command .grip {
    width: 6px;
    height: 18px;
    margin: 0 4px 0 2px;
}
.command input {
    flex: 1;
    min-width: 0;
    height: 26px;
    margin-top: 5px;
    padding: 9px 0 0 1px;
    border: solid #222222;
    border-width: 2px 0 0 1px;
    background-color: #ffffff;
    font-family: "Liberation Mono", monospace;
    font-size: 13px;
    outline: none;
}

/* status bar */
.status-bar {
    flex: none;
    display: flex;
    align-items: center;
    gap: 3px;
    height: 22px;
    padding: 0 6px 0 5px;
    border-top: 1px solid #ffffff;
}
.coords {
    width: 238px;
    height: 18px;
    padding-left: 1px;
    border: 1px solid #aca899;
    border-right-color: #ffffff;
    border-bottom-color: #ffffff;
    font-family: "Liberation Sans", sans-serif;
    line-height: 16px;
}
.status-bar button {
    height: 18px;
    padding: 0 1px;
    border: 1px solid transparent;
    border-right-color: #c3bfae;
    font-family: "Liberation Sans", sans-serif;
}
.status-bar .on {
    border-color: #444444 #ffffff #ffffff #444444;
    background-color: #f3f1e6;
}
.comm {
    margin-left: auto;
    width: 24px;
    padding: 0 3px;
    border: 1px solid #c3bfae;
}
.comm svg {
    width: 18px;
    height: 16px;
}
.tray-arrow {
    width: 8px;
    height: 8px;
    margin: 4px 0 0 4px;
}

/* taskbar */
.taskbar {
    flex: none;
    display: flex;
    height: 30px;
    background: linear-gradient(#1f4fb8 0%, #4a8cf5 7%, #2a63de 20%, #245edb 85%, #1941a5 100%);
    color: #ffffff;
}
.start {
    width: 97px;
    gap: 4px;
    padding-right: 13px;
    border-radius: 0 10px 10px 0;
    background: linear-gradient(#2c7a2c 0%, #5fb65c 10%, #389438 30%, #3a9a3a 80%, #256c26 100%);
    box-shadow: 1px 0 3px #143a80;
    font-family: "Open Sans", sans-serif;
    font-size: 17px;
    font-weight: 700;
    font-style: italic;
    text-shadow: 1px 1px 2px #1c4a1c;
}
.start svg {
    width: 20px;
    height: 20px;
}
.quick {
    display: flex;
    align-items: center;
    gap: 8px;
    width: 101px;
    padding-left: 11px;
}
.quick svg {
    width: 16px;
    height: 16px;
}
.more {
    margin: -12px 0 0 3px;
    font-size: 14px;
}
.tasks {
    flex: 1;
    min-width: 0;
    display: flex;
    gap: 3px;
    padding: 3px 0 2px;
}
.task {
    flex: 1;
    min-width: 0;
    justify-content: flex-start;
    gap: 4px;
    padding-left: 9px;
    overflow: hidden;
    white-space: nowrap;
    border-radius: 2px;
    background: linear-gradient(#5f9bff, #3c81f3 20%, #3a7df0 85%, #2c66d6);
}
.task svg {
    width: 16px;
    height: 16px;
}
.task.current {
    background: #1e4fb5;
    box-shadow: inset 1px 1px 2px #12337c;
}
.lang {
    display: flex;
    align-items: center;
    gap: 9px;
    width: 67px;
    padding-left: 10px;
}
.lang svg {
    width: 15px;
    height: 15px;
}
.tray {
    display: flex;
    align-items: center;
    gap: 3px;
    width: 147px;
    background: linear-gradient(#1583d8 0%, #2fb4f7 8%, #1290e9 25%, #139af0 85%, #0f6fc4 100%);
}
.tray > svg {
    width: 16px;
    height: 16px;
}
.hide {
    width: 17px;
    height: 17px;
    margin-left: -8px;
    border-radius: 50%;
    background: radial-gradient(#5cb8ff, #1e78dc);
    box-shadow: 0 0 1px #ffffff;
}
.hide svg {
    width: 14px;
    height: 14px;
}
.tray time {
    white-space: nowrap;
}
```
